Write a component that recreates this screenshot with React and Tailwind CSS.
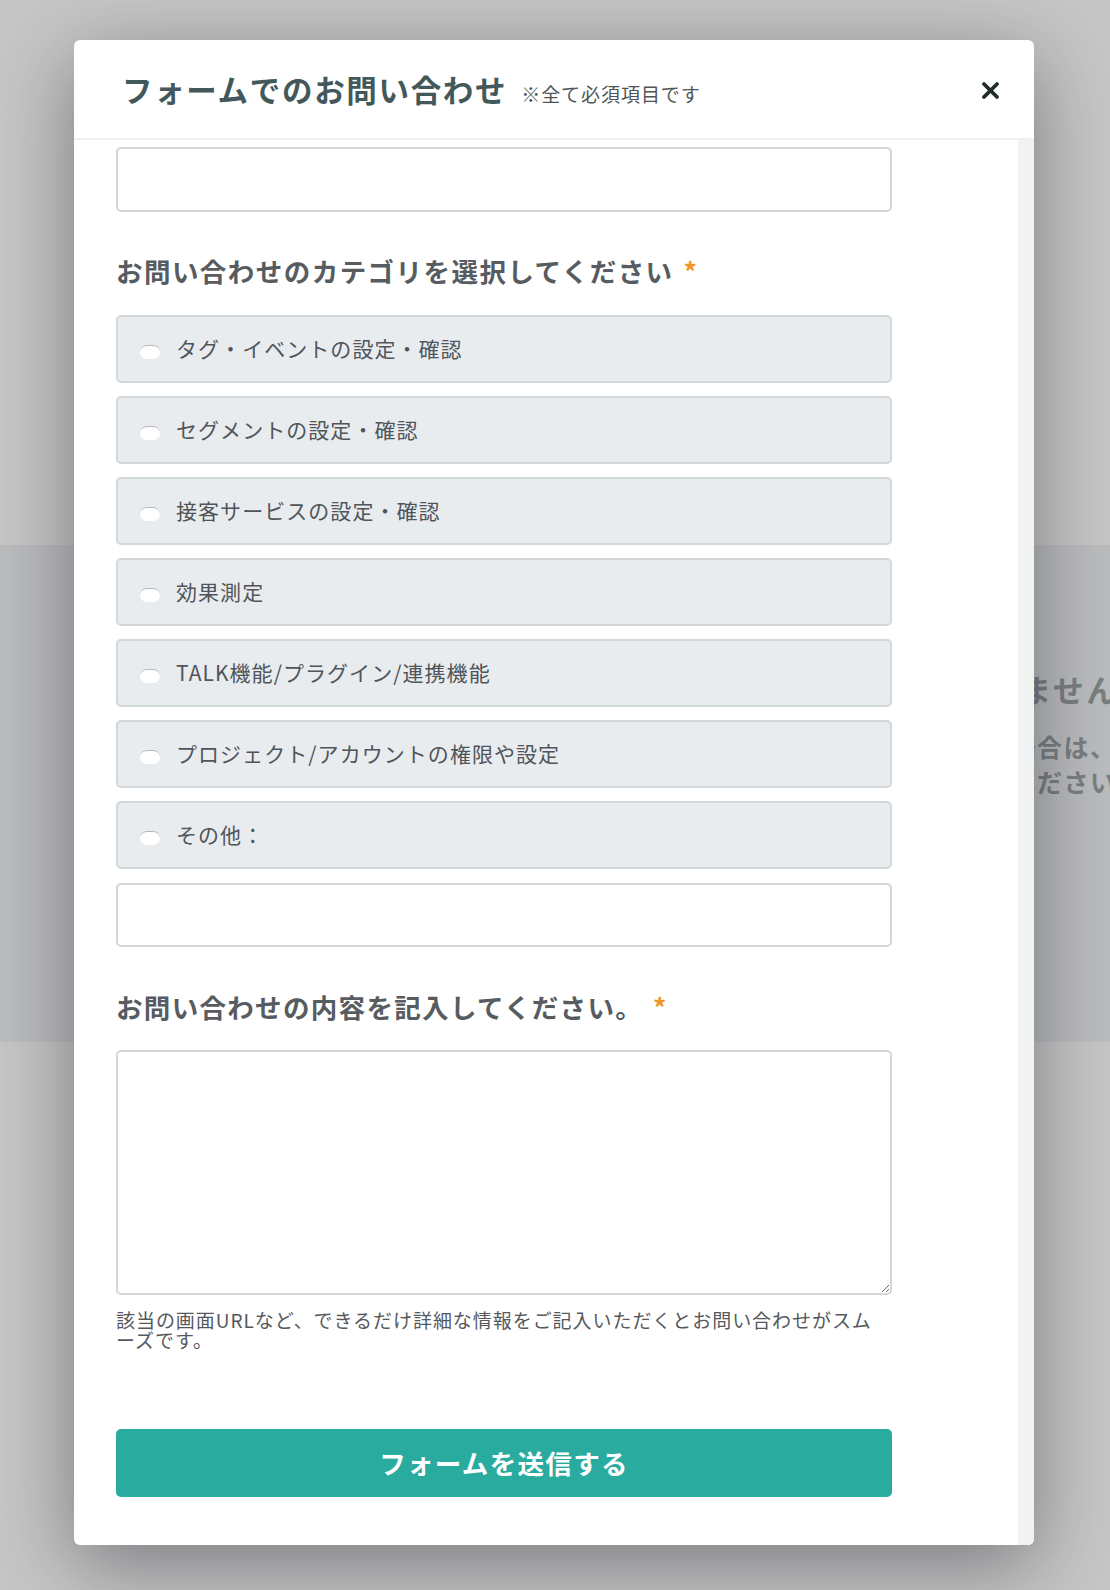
const categories = [
  'タグ・イベントの設定・確認',
  'セグメントの設定・確認',
  '接客サービスの設定・確認',
  '効果測定',
  'TALK機能/プラグイン/連携機能',
  'プロジェクト/アカウントの権限や設定',
  'その他：',
];

function Required() {
  return <span className="ml-[10px] text-[#f0952a]">*</span>;
}

function CategoryOption({ label }) {
  return (
    <label className="flex h-[68px] items-center rounded-[5px] border-2 border-[#d2d7da] bg-[#e9ecee] pl-[22px]">
      <span className="mt-[5px] h-[14px] w-[20px] rounded-full border-t border-[#b3b8bc] bg-white" />
      <span className="ml-[16px] text-[21px] tracking-[0.05em] text-[#4f555a]">{label}</span>
    </label>
  );
}

function ContactModal() {
  return (
    <div className="flex h-[1505px] w-[960px] flex-col overflow-hidden rounded-[6px] bg-white shadow-[0_20px_80px_rgba(20,20,30,0.42)]">
      <header className="flex h-[100px] shrink-0 items-center border-b-2 border-[#eef0f1] pl-[48px] pr-[33px] pt-[2px]">
        <div className="flex flex-1 items-baseline">
          <h2 className="text-[30.5px] font-bold tracking-[0.055em] text-[#43585a]">フォームでのお問い合わせ</h2>
          <span className="ml-[14px] text-[19px] tracking-[0.05em] text-[#4d5557]">※全て必須項目です</span>
        </div>
        <button className="flex h-[22px] w-[22px] items-center justify-center text-[#1f2b2d]" aria-label="閉じる">
          <svg viewBox="0 0 16 16" className="h-[19px] w-[19px]">
            <path d="M2.5 2.5 13.5 13.5M13.5 2.5 2.5 13.5" stroke="currentColor" strokeWidth="3.2" strokeLinecap="round" />
          </svg>
        </button>
      </header>

      <div className="flex min-h-0 flex-1">
        <form className="flex-1 overflow-hidden pl-[42px] pt-[7px]">
          <div className="flex w-[776px] flex-col">
            <input type="text" className="h-[65px] rounded-[5px] border-2 border-[#d2d7da] bg-white" />

            <p className="mt-[39px] text-[26.5px] font-bold leading-[40px] tracking-[0.055em] text-[#575c61]">
              お問い合わせのカテゴリを選択してください<Required />
            </p>

            <div className="mt-[24px] flex flex-col gap-[13px]">
              {categories.map((c) => (
                <CategoryOption key={c} label={c} />
              ))}
            </div>

            <input type="text" className="mt-[14px] h-[64px] rounded-[5px] border-2 border-[#d2d7da] bg-white" />

            <p className="mt-[40px] text-[26.5px] font-bold leading-[40px] tracking-[0.05em] text-[#575c61]">
              お問い合わせの内容を記入してください。<Required />
            </p>

            <textarea className="mt-[23px] h-[245px] rounded-[5px] border-2 border-[#d2d7da] bg-white" />

            <p className="mt-[15px] w-[770px] text-[19px] leading-[20px] tracking-[0.05em] text-[#55595d]">
              該当の画面URLなど、できるだけ詳細な情報をご記入いただくとお問い合わせがスムーズです。
            </p>

            <button
              type="button"
              className="mt-[79px] h-[68px] rounded-[5px] bg-[#2aab9f] text-[26.5px] font-bold tracking-[0.05em] text-white"
            >
              フォームを送信する
            </button>
          </div>
        </form>
        <div className="w-[16px] shrink-0 bg-[#f1f2f2]" />
      </div>
    </div>
  );
}

export default function App() {
  return (
    <div className="relative h-[1590px] w-full overflow-hidden bg-[#c6c6c6] font-['Noto_Sans_CJK_JP',sans-serif]">
      {/* page behind the dialog, dimmed by the backdrop */}
      <main className="pt-[545px]">
        <section className="h-[497px] whitespace-nowrap bg-[#bbbcbe] pl-[746px] pt-[126px] font-bold text-[#7a7f81]">
          <p className="ml-[7px] text-[31px] leading-[36px] tracking-[0.08em]">ページが見つかりません</p>
          <p className="mt-[22px] text-[25px] leading-[35px] tracking-[0.06em]">お探しのページがない場合は、</p>
          <p className="text-[25px] leading-[35px] tracking-[0.06em]">下記よりお問い合わせください</p>
        </section>
      </main>

      <div className="absolute inset-0 flex items-start pl-[74px] pt-[40px]">
        <ContactModal />
      </div>
    </div>
  );
}
